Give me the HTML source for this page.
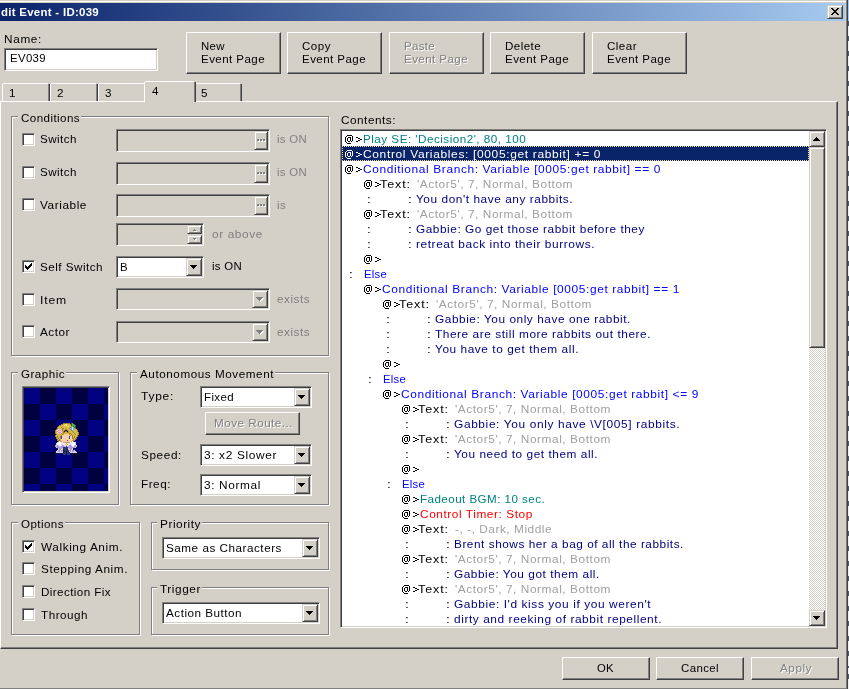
<!DOCTYPE html><html><head><meta charset="utf-8"><style>*{margin:0;padding:0}html,body{width:849px;height:689px;overflow:hidden;background:#d4d0c8;position:relative}
body>div,body>svg{position:absolute;box-sizing:border-box}
.t{will-change:transform;transform-origin:0 0;font-family:"Liberation Sans", sans-serif;font-size:11px;line-height:13px;white-space:pre}</style></head><body><div style="left:0px;top:1px;width:846px;height:1px;background:#ffffff"></div><div style="left:0px;top:688px;width:846px;height:1px;background:#808080"></div><div style="left:846px;top:0px;width:1px;height:689px;background:#808080"></div><div style="left:847px;top:0px;width:1px;height:689px;background:#404040"></div><div style="left:848px;top:0px;width:1px;height:21px;background:#a6caf0"></div><div style="left:848px;top:21px;width:1px;height:668px;background:repeating-linear-gradient(to bottom,#eef0f0 0 6px,#4a5a66 6px 11px,#eef0f0 11px 15px);background-position:0 -21px"></div><div style="left:0px;top:3px;width:845px;height:18px;background:linear-gradient(to right,#0a246a,#a6caf0)"></div><div class="t" style="left:1px;top:6px;color:#fff;transform:scaleX(1.0392);letter-spacing:0.28px;font-weight:bold;">dit Event - ID:039</div><div style="left:827px;top:5px;width:16px;height:14px;background:#d4d0c8;border:1px solid;border-color:#d4d0c8 #404040 #404040 #d4d0c8;box-shadow:inset 1px 1px 0 #ffffff,inset -1px -1px 0 #808080"></div><svg style="left:831px;top:8px" width="8" height="7" shape-rendering="crispEdges" fill="#000"><rect x="0" y="0" width="2" height="1"/><rect x="6" y="0" width="2" height="1"/><rect x="1" y="1" width="2" height="1"/><rect x="5" y="1" width="2" height="1"/><rect x="2" y="2" width="2" height="1"/><rect x="4" y="2" width="2" height="1"/><rect x="3" y="3" width="2" height="1"/><rect x="2" y="4" width="2" height="1"/><rect x="4" y="4" width="2" height="1"/><rect x="1" y="5" width="2" height="1"/><rect x="5" y="5" width="2" height="1"/><rect x="0" y="6" width="2" height="1"/><rect x="6" y="6" width="2" height="1"/><rect x="3" y="2" width="2" height="3"/></svg><div class="t" style="left:4px;top:33px;color:#000;transform:scaleX(1.0690);letter-spacing:0.63px;">Name:</div><div style="left:4px;top:48px;width:154px;height:23px;background:#ffffff;border:1px solid;border-color:#808080 #ffffff #ffffff #808080;box-shadow:inset 1px 1px 0 #404040,inset -1px -1px 0 #d4d0c8"></div><div class="t" style="left:10px;top:52px;color:#000;transform:scaleX(1.0360);letter-spacing:0.34px;">EV039</div><div style="left:186px;top:32px;width:95px;height:42px;background:#d4d0c8;border:1px solid;border-color:#ffffff #404040 #404040 #ffffff;box-shadow:inset -1px -1px 0 #808080"></div><div class="t" style="left:201px;top:40px;color:#000;transform:scaleX(1.0361);letter-spacing:0.38px;">New</div><div class="t" style="left:201px;top:53px;color:#000;transform:scaleX(1.0501);letter-spacing:0.41px;">Event Page</div><div style="left:287px;top:32px;width:95px;height:42px;background:#d4d0c8;border:1px solid;border-color:#ffffff #404040 #404040 #ffffff;box-shadow:inset -1px -1px 0 #808080"></div><div class="t" style="left:302px;top:40px;color:#000;transform:scaleX(1.0516);letter-spacing:0.47px;">Copy</div><div class="t" style="left:302px;top:53px;color:#000;transform:scaleX(1.0501);letter-spacing:0.41px;">Event Page</div><div style="left:389px;top:32px;width:95px;height:42px;background:#d4d0c8;border:1px solid;border-color:#ffffff #404040 #404040 #ffffff;box-shadow:inset -1px -1px 0 #808080"></div><div class="t" style="left:405px;top:41px;color:#ffffff;transform:scaleX(1.0406);letter-spacing:0.33px;">Paste</div><div class="t" style="left:404px;top:40px;color:#808080;transform:scaleX(1.0406);letter-spacing:0.33px;">Paste</div><div class="t" style="left:405px;top:54px;color:#ffffff;transform:scaleX(1.0501);letter-spacing:0.41px;">Event Page</div><div class="t" style="left:404px;top:53px;color:#808080;transform:scaleX(1.0501);letter-spacing:0.41px;">Event Page</div><div style="left:490px;top:32px;width:95px;height:42px;background:#d4d0c8;border:1px solid;border-color:#ffffff #404040 #404040 #ffffff;box-shadow:inset -1px -1px 0 #808080"></div><div class="t" style="left:505px;top:40px;color:#000;transform:scaleX(1.0529);letter-spacing:0.40px;">Delete</div><div class="t" style="left:505px;top:53px;color:#000;transform:scaleX(1.0501);letter-spacing:0.41px;">Event Page</div><div style="left:592px;top:32px;width:95px;height:42px;background:#d4d0c8;border:1px solid;border-color:#ffffff #404040 #404040 #ffffff;box-shadow:inset -1px -1px 0 #808080"></div><div class="t" style="left:607px;top:40px;color:#000;transform:scaleX(1.0563);letter-spacing:0.42px;">Clear</div><div class="t" style="left:607px;top:53px;color:#000;transform:scaleX(1.0501);letter-spacing:0.41px;">Event Page</div><div style="left:0px;top:101px;width:838px;height:548px;border:1px solid;border-color:#ffffff #404040 #404040 #ffffff;box-shadow:inset -1px -1px 0 #808080"></div><div style="left:2px;top:84px;width:1px;height:17px;background:#ffffff"></div><div style="left:3px;top:83px;width:45px;height:1px;background:#ffffff"></div><div style="left:48px;top:84px;width:1px;height:17px;background:#808080"></div><div style="left:49px;top:84px;width:1px;height:17px;background:#404040"></div><div class="t" style="left:9px;top:87px;color:#000;transform:scaleX(1.0571);letter-spacing:0.50px;">1</div><div style="left:50px;top:84px;width:1px;height:17px;background:#ffffff"></div><div style="left:51px;top:83px;width:45px;height:1px;background:#ffffff"></div><div style="left:96px;top:84px;width:1px;height:17px;background:#808080"></div><div style="left:97px;top:84px;width:1px;height:17px;background:#404040"></div><div class="t" style="left:57px;top:87px;color:#000;transform:scaleX(1.0571);letter-spacing:0.50px;">2</div><div style="left:98px;top:84px;width:1px;height:17px;background:#ffffff"></div><div style="left:99px;top:83px;width:45px;height:1px;background:#ffffff"></div><div style="left:144px;top:84px;width:1px;height:17px;background:#808080"></div><div style="left:145px;top:84px;width:1px;height:17px;background:#404040"></div><div class="t" style="left:105px;top:87px;color:#000;transform:scaleX(1.0571);letter-spacing:0.50px;">3</div><div style="left:194px;top:84px;width:1px;height:17px;background:#ffffff"></div><div style="left:195px;top:83px;width:45px;height:1px;background:#ffffff"></div><div style="left:240px;top:84px;width:1px;height:17px;background:#808080"></div><div style="left:241px;top:84px;width:1px;height:17px;background:#404040"></div><div class="t" style="left:201px;top:87px;color:#000;transform:scaleX(1.0571);letter-spacing:0.50px;">5</div><div style="left:144px;top:81px;width:52px;height:22px;background:#d4d0c8"></div><div style="left:144px;top:82px;width:1px;height:20px;background:#ffffff"></div><div style="left:145px;top:81px;width:49px;height:1px;background:#ffffff"></div><div style="left:194px;top:82px;width:1px;height:20px;background:#808080"></div><div style="left:195px;top:82px;width:1px;height:20px;background:#404040"></div><div class="t" style="left:152px;top:85px;color:#000;transform:scaleX(1.0571);letter-spacing:0.50px;">4</div><div style="left:12px;top:117px;width:318px;height:240px;border:1px solid #ffffff"></div><div style="left:11px;top:116px;width:318px;height:240px;border:1px solid #808080"></div><div style="left:18px;top:115px;width:63px;height:4px;background:#d4d0c8"></div><div class="t" style="left:21px;top:112px;color:#000;transform:scaleX(1.0540);letter-spacing:0.40px;">Conditions</div><div style="left:22px;top:133px;width:13px;height:13px;background:#ffffff;border:1px solid;border-color:#808080 #ffffff #ffffff #808080;box-shadow:inset 1px 1px 0 #404040,inset -1px -1px 0 #d4d0c8"></div><div class="t" style="left:40px;top:133px;color:#000;transform:scaleX(1.0567);letter-spacing:0.43px;">Switch</div><div style="left:116px;top:129px;width:154px;height:23px;background:#d4d0c8;border:1px solid;border-color:#808080 #ffffff #ffffff #808080;box-shadow:inset 1px 1px 0 #404040,inset -1px -1px 0 #d4d0c8"></div><div style="left:254px;top:131px;width:14px;height:19px;background:#d4d0c8;border:1px solid;border-color:#d4d0c8 #404040 #404040 #d4d0c8;box-shadow:inset 1px 1px 0 #ffffff,inset -1px -1px 0 #808080"></div><div style="left:257px;top:139px;width:2px;height:2px;background:#808080;box-shadow:1px 1px 0 #fff"></div><div style="left:260px;top:139px;width:2px;height:2px;background:#808080;box-shadow:1px 1px 0 #fff"></div><div style="left:263px;top:139px;width:2px;height:2px;background:#808080;box-shadow:1px 1px 0 #fff"></div><div class="t" style="left:277px;top:133px;color:#808080;transform:scaleX(1.0364);letter-spacing:0.29px;">is ON</div><div style="left:22px;top:166px;width:13px;height:13px;background:#ffffff;border:1px solid;border-color:#808080 #ffffff #ffffff #808080;box-shadow:inset 1px 1px 0 #404040,inset -1px -1px 0 #d4d0c8"></div><div class="t" style="left:40px;top:166px;color:#000;transform:scaleX(1.0567);letter-spacing:0.43px;">Switch</div><div style="left:116px;top:162px;width:154px;height:23px;background:#d4d0c8;border:1px solid;border-color:#808080 #ffffff #ffffff #808080;box-shadow:inset 1px 1px 0 #404040,inset -1px -1px 0 #d4d0c8"></div><div style="left:254px;top:164px;width:14px;height:19px;background:#d4d0c8;border:1px solid;border-color:#d4d0c8 #404040 #404040 #d4d0c8;box-shadow:inset 1px 1px 0 #ffffff,inset -1px -1px 0 #808080"></div><div style="left:257px;top:172px;width:2px;height:2px;background:#808080;box-shadow:1px 1px 0 #fff"></div><div style="left:260px;top:172px;width:2px;height:2px;background:#808080;box-shadow:1px 1px 0 #fff"></div><div style="left:263px;top:172px;width:2px;height:2px;background:#808080;box-shadow:1px 1px 0 #fff"></div><div class="t" style="left:277px;top:166px;color:#808080;transform:scaleX(1.0364);letter-spacing:0.29px;">is ON</div><div style="left:22px;top:198px;width:13px;height:13px;background:#ffffff;border:1px solid;border-color:#808080 #ffffff #ffffff #808080;box-shadow:inset 1px 1px 0 #404040,inset -1px -1px 0 #d4d0c8"></div><div class="t" style="left:40px;top:199px;color:#000;transform:scaleX(1.0754);letter-spacing:0.52px;">Variable</div><div style="left:116px;top:194px;width:154px;height:23px;background:#d4d0c8;border:1px solid;border-color:#808080 #ffffff #ffffff #808080;box-shadow:inset 1px 1px 0 #404040,inset -1px -1px 0 #d4d0c8"></div><div style="left:254px;top:196px;width:14px;height:19px;background:#d4d0c8;border:1px solid;border-color:#d4d0c8 #404040 #404040 #d4d0c8;box-shadow:inset 1px 1px 0 #ffffff,inset -1px -1px 0 #808080"></div><div style="left:257px;top:204px;width:2px;height:2px;background:#808080;box-shadow:1px 1px 0 #fff"></div><div style="left:260px;top:204px;width:2px;height:2px;background:#808080;box-shadow:1px 1px 0 #fff"></div><div style="left:263px;top:204px;width:2px;height:2px;background:#808080;box-shadow:1px 1px 0 #fff"></div><div class="t" style="left:277px;top:199px;color:#808080;transform:scaleX(1.0527);letter-spacing:0.30px;">is</div><div style="left:116px;top:223px;width:88px;height:23px;background:#d4d0c8;border:1px solid;border-color:#808080 #ffffff #ffffff #808080;box-shadow:inset 1px 1px 0 #404040,inset -1px -1px 0 #d4d0c8"></div><div style="left:187px;top:225px;width:15px;height:9px;background:#d4d0c8;border:1px solid;border-color:#d4d0c8 #404040 #404040 #d4d0c8;box-shadow:inset 1px 1px 0 #ffffff,inset -1px -1px 0 #808080"></div><div style="left:187px;top:235px;width:15px;height:9px;background:#d4d0c8;border:1px solid;border-color:#d4d0c8 #404040 #404040 #d4d0c8;box-shadow:inset 1px 1px 0 #ffffff,inset -1px -1px 0 #808080"></div><svg style="left:193px;top:229px" width="4" height="3" shape-rendering="crispEdges"><g fill="#fff"><rect x="1" y="2" width="3" height="1"/><rect x="2" y="1" width="1" height="1"/></g><g fill="#808080"><rect x="0" y="1" width="3" height="1"/><rect x="1" y="0" width="1" height="1"/></g></svg><svg style="left:193px;top:238px" width="4" height="3" shape-rendering="crispEdges"><g fill="#fff"><rect x="1" y="1" width="3" height="1"/><rect x="2" y="2" width="1" height="1"/></g><g fill="#808080"><rect x="0" y="0" width="3" height="1"/><rect x="1" y="1" width="1" height="1"/></g></svg><div class="t" style="left:212px;top:228px;color:#808080;transform:scaleX(1.0765);letter-spacing:0.57px;">or above</div><div style="left:22px;top:260px;width:13px;height:13px;background:#ffffff;border:1px solid;border-color:#808080 #ffffff #ffffff #808080;box-shadow:inset 1px 1px 0 #404040,inset -1px -1px 0 #d4d0c8"></div><svg style="left:25px;top:263px" width="7" height="7" shape-rendering="crispEdges" fill="#000"><rect x="6" y="0" width="1" height="1"/><rect x="5" y="1" width="1" height="1"/><rect x="6" y="1" width="1" height="1"/><rect x="0" y="2" width="1" height="1"/><rect x="4" y="2" width="1" height="1"/><rect x="5" y="2" width="1" height="1"/><rect x="6" y="2" width="1" height="1"/><rect x="0" y="3" width="1" height="1"/><rect x="1" y="3" width="1" height="1"/><rect x="3" y="3" width="1" height="1"/><rect x="4" y="3" width="1" height="1"/><rect x="5" y="3" width="1" height="1"/><rect x="0" y="4" width="1" height="1"/><rect x="1" y="4" width="1" height="1"/><rect x="2" y="4" width="1" height="1"/><rect x="3" y="4" width="1" height="1"/><rect x="4" y="4" width="1" height="1"/><rect x="1" y="5" width="1" height="1"/><rect x="2" y="5" width="1" height="1"/><rect x="3" y="5" width="1" height="1"/><rect x="2" y="6" width="1" height="1"/></svg><div class="t" style="left:40px;top:261px;color:#000;transform:scaleX(1.0630);letter-spacing:0.44px;">Self Switch</div><div style="left:116px;top:256px;width:88px;height:22px;background:#ffffff;border:1px solid;border-color:#808080 #ffffff #ffffff #808080;box-shadow:inset 1px 1px 0 #404040,inset -1px -1px 0 #d4d0c8"></div><div style="left:186px;top:258px;width:16px;height:18px;background:#d4d0c8;border:1px solid;border-color:#d4d0c8 #404040 #404040 #d4d0c8;box-shadow:inset 1px 1px 0 #ffffff,inset -1px -1px 0 #808080"></div><svg style="left:190px;top:265px" width="7" height="4" shape-rendering="crispEdges" fill="#000"><rect x="0" y="0" width="7" height="1"/><rect x="1" y="1" width="5" height="1"/><rect x="2" y="2" width="3" height="1"/><rect x="3" y="3" width="1" height="1"/></svg><div class="t" style="left:120px;top:261px;color:#000;transform:scaleX(1.0357);letter-spacing:0.38px;">B</div><div class="t" style="left:212px;top:260px;color:#000;transform:scaleX(1.0364);letter-spacing:0.29px;">is ON</div><div style="left:22px;top:293px;width:13px;height:13px;background:#ffffff;border:1px solid;border-color:#808080 #ffffff #ffffff #808080;box-shadow:inset 1px 1px 0 #404040,inset -1px -1px 0 #d4d0c8"></div><div class="t" style="left:40px;top:294px;color:#000;transform:scaleX(1.1045);letter-spacing:0.76px;">Item</div><div style="left:116px;top:288px;width:154px;height:22px;background:#d4d0c8;border:1px solid;border-color:#808080 #ffffff #ffffff #808080;box-shadow:inset 1px 1px 0 #404040,inset -1px -1px 0 #d4d0c8"></div><div style="left:252px;top:290px;width:16px;height:18px;background:#d4d0c8;border:1px solid;border-color:#d4d0c8 #404040 #404040 #d4d0c8;box-shadow:inset 1px 1px 0 #ffffff,inset -1px -1px 0 #808080"></div><svg style="left:256px;top:297px" width="8" height="5" shape-rendering="crispEdges"><g fill="#fff"><rect x="1" y="1" width="7" height="1"/><rect x="2" y="2" width="5" height="1"/><rect x="3" y="3" width="3" height="1"/><rect x="4" y="4" width="1" height="1"/></g><g fill="#808080"><rect x="0" y="0" width="7" height="1"/><rect x="1" y="1" width="5" height="1"/><rect x="2" y="2" width="3" height="1"/><rect x="3" y="3" width="1" height="1"/></g></svg><div class="t" style="left:277px;top:293px;color:#808080;transform:scaleX(1.0693);letter-spacing:0.46px;">exists</div><div style="left:22px;top:325px;width:13px;height:13px;background:#ffffff;border:1px solid;border-color:#808080 #ffffff #ffffff #808080;box-shadow:inset 1px 1px 0 #404040,inset -1px -1px 0 #d4d0c8"></div><div class="t" style="left:40px;top:326px;color:#000;transform:scaleX(1.0672);letter-spacing:0.48px;">Actor</div><div style="left:116px;top:321px;width:154px;height:22px;background:#d4d0c8;border:1px solid;border-color:#808080 #ffffff #ffffff #808080;box-shadow:inset 1px 1px 0 #404040,inset -1px -1px 0 #d4d0c8"></div><div style="left:252px;top:323px;width:16px;height:18px;background:#d4d0c8;border:1px solid;border-color:#d4d0c8 #404040 #404040 #d4d0c8;box-shadow:inset 1px 1px 0 #ffffff,inset -1px -1px 0 #808080"></div><svg style="left:256px;top:330px" width="8" height="5" shape-rendering="crispEdges"><g fill="#fff"><rect x="1" y="1" width="7" height="1"/><rect x="2" y="2" width="5" height="1"/><rect x="3" y="3" width="3" height="1"/><rect x="4" y="4" width="1" height="1"/></g><g fill="#808080"><rect x="0" y="0" width="7" height="1"/><rect x="1" y="1" width="5" height="1"/><rect x="2" y="2" width="3" height="1"/><rect x="3" y="3" width="1" height="1"/></g></svg><div class="t" style="left:277px;top:326px;color:#808080;transform:scaleX(1.0693);letter-spacing:0.46px;">exists</div><div style="left:12px;top:373px;width:108px;height:133px;border:1px solid #ffffff"></div><div style="left:11px;top:372px;width:108px;height:133px;border:1px solid #808080"></div><div style="left:18px;top:371px;width:48px;height:4px;background:#d4d0c8"></div><div class="t" style="left:21px;top:368px;color:#000;transform:scaleX(1.0568);letter-spacing:0.44px;">Graphic</div><div style="left:22px;top:386px;width:88px;height:107px;background:#000080;border:1px solid;border-color:#808080 #ffffff #ffffff #808080;box-shadow:inset 1px 1px 0 #404040,inset -1px -1px 0 #d4d0c8"></div><div style="left:24px;top:388px;width:84px;height:103px;background:repeating-conic-gradient(#000040 0 25%,#000080 0 50%) 0 0/32px 32px"></div><svg style="left:54px;top:423px" width="26" height="32" shape-rendering="crispEdges"><rect x="9" y="0" width="7" height="1" fill="#a08028"/><rect x="17" y="0" width="1" height="1" fill="#306820"/><rect x="18" y="0" width="1" height="1" fill="#58b048"/><rect x="7" y="1" width="2" height="1" fill="#a08028"/><rect x="9" y="1" width="2" height="1" fill="#d8b848"/><rect x="11" y="1" width="2" height="1" fill="#f8e078"/><rect x="13" y="1" width="3" height="1" fill="#d8b848"/><rect x="16" y="1" width="1" height="1" fill="#a08028"/><rect x="17" y="1" width="1" height="1" fill="#306820"/><rect x="18" y="1" width="2" height="1" fill="#58b048"/><rect x="20" y="1" width="1" height="1" fill="#306820"/><rect x="5" y="2" width="2" height="1" fill="#a08028"/><rect x="7" y="2" width="3" height="1" fill="#d8b848"/><rect x="10" y="2" width="3" height="1" fill="#f8e078"/><rect x="13" y="2" width="4" height="1" fill="#d8b848"/><rect x="17" y="2" width="1" height="1" fill="#306820"/><rect x="18" y="2" width="3" height="1" fill="#58b048"/><rect x="21" y="2" width="1" height="1" fill="#306820"/><rect x="4" y="3" width="1" height="1" fill="#a08028"/><rect x="5" y="3" width="8" height="1" fill="#d8b848"/><rect x="13" y="3" width="2" height="1" fill="#f8e078"/><rect x="15" y="3" width="2" height="1" fill="#d8b848"/><rect x="17" y="3" width="1" height="1" fill="#a08028"/><rect x="18" y="3" width="1" height="1" fill="#68b0f8"/><rect x="19" y="3" width="1" height="1" fill="#306820"/><rect x="20" y="3" width="1" height="1" fill="#58b048"/><rect x="21" y="3" width="1" height="1" fill="#306820"/><rect x="3" y="4" width="1" height="1" fill="#a08028"/><rect x="4" y="4" width="3" height="1" fill="#d8b848"/><rect x="7" y="4" width="1" height="1" fill="#a08028"/><rect x="8" y="4" width="8" height="1" fill="#d8b848"/><rect x="16" y="4" width="1" height="1" fill="#a08028"/><rect x="17" y="4" width="1" height="1" fill="#68b0f8"/><rect x="18" y="4" width="1" height="1" fill="#d0f0ff"/><rect x="19" y="4" width="1" height="1" fill="#68b0f8"/><rect x="20" y="4" width="2" height="1" fill="#306820"/><rect x="3" y="5" width="1" height="1" fill="#a08028"/><rect x="4" y="5" width="4" height="1" fill="#d8b848"/><rect x="8" y="5" width="2" height="1" fill="#a08028"/><rect x="10" y="5" width="5" height="1" fill="#d8b848"/><rect x="15" y="5" width="1" height="1" fill="#a08028"/><rect x="16" y="5" width="2" height="1" fill="#68b0f8"/><rect x="18" y="5" width="1" height="1" fill="#ffe040"/><rect x="19" y="5" width="2" height="1" fill="#68b0f8"/><rect x="21" y="5" width="1" height="1" fill="#a08028"/><rect x="2" y="6" width="1" height="1" fill="#a08028"/><rect x="3" y="6" width="1" height="1" fill="#d8b848"/><rect x="4" y="6" width="1" height="1" fill="#ffe0e8"/><rect x="5" y="6" width="1" height="1" fill="#f090a8"/><rect x="6" y="6" width="1" height="1" fill="#ffe0e8"/><rect x="7" y="6" width="1" height="1" fill="#d8b848"/><rect x="8" y="6" width="1" height="1" fill="#a08028"/><rect x="9" y="6" width="2" height="1" fill="#d8b848"/><rect x="11" y="6" width="2" height="1" fill="#a08028"/><rect x="13" y="6" width="3" height="1" fill="#d8b848"/><rect x="16" y="6" width="1" height="1" fill="#a08028"/><rect x="17" y="6" width="1" height="1" fill="#68b0f8"/><rect x="18" y="6" width="1" height="1" fill="#d0f0ff"/><rect x="19" y="6" width="1" height="1" fill="#68b0f8"/><rect x="20" y="6" width="2" height="1" fill="#d8b848"/><rect x="22" y="6" width="1" height="1" fill="#a08028"/><rect x="1" y="7" width="1" height="1" fill="#a08028"/><rect x="2" y="7" width="1" height="1" fill="#d8b848"/><rect x="3" y="7" width="1" height="1" fill="#ffe0e8"/><rect x="4" y="7" width="3" height="1" fill="#f090a8"/><rect x="7" y="7" width="1" height="1" fill="#ffe0e8"/><rect x="8" y="7" width="1" height="1" fill="#a08028"/><rect x="9" y="7" width="1" height="1" fill="#d8b848"/><rect x="10" y="7" width="1" height="1" fill="#a08028"/><rect x="11" y="7" width="2" height="1" fill="#181830"/><rect x="13" y="7" width="1" height="1" fill="#a08028"/><rect x="14" y="7" width="3" height="1" fill="#d8b848"/><rect x="17" y="7" width="1" height="1" fill="#a08028"/><rect x="18" y="7" width="1" height="1" fill="#68b0f8"/><rect x="19" y="7" width="4" height="1" fill="#d8b848"/><rect x="23" y="7" width="1" height="1" fill="#a08028"/><rect x="1" y="8" width="1" height="1" fill="#a08028"/><rect x="2" y="8" width="2" height="1" fill="#f090a8"/><rect x="4" y="8" width="1" height="1" fill="#ffe0e8"/><rect x="5" y="8" width="1" height="1" fill="#ffe040"/><rect x="6" y="8" width="1" height="1" fill="#ffe0e8"/><rect x="7" y="8" width="2" height="1" fill="#f090a8"/><rect x="9" y="8" width="1" height="1" fill="#a08028"/><rect x="10" y="8" width="1" height="1" fill="#181830"/><rect x="11" y="8" width="2" height="1" fill="#a08028"/><rect x="13" y="8" width="1" height="1" fill="#181830"/><rect x="14" y="8" width="1" height="1" fill="#a08028"/><rect x="15" y="8" width="3" height="1" fill="#d8b848"/><rect x="18" y="8" width="1" height="1" fill="#a08028"/><rect x="19" y="8" width="4" height="1" fill="#d8b848"/><rect x="23" y="8" width="1" height="1" fill="#a08028"/><rect x="1" y="9" width="1" height="1" fill="#a08028"/><rect x="2" y="9" width="1" height="1" fill="#d8b848"/><rect x="3" y="9" width="1" height="1" fill="#ffe0e8"/><rect x="4" y="9" width="3" height="1" fill="#f090a8"/><rect x="7" y="9" width="1" height="1" fill="#ffe0e8"/><rect x="8" y="9" width="1" height="1" fill="#d8b848"/><rect x="9" y="9" width="2" height="1" fill="#a08028"/><rect x="11" y="9" width="2" height="1" fill="#d8b848"/><rect x="13" y="9" width="2" height="1" fill="#a08028"/><rect x="15" y="9" width="4" height="1" fill="#d8b848"/><rect x="19" y="9" width="1" height="1" fill="#a08028"/><rect x="20" y="9" width="4" height="1" fill="#d8b848"/><rect x="24" y="9" width="1" height="1" fill="#a08028"/><rect x="1" y="10" width="1" height="1" fill="#a08028"/><rect x="2" y="10" width="2" height="1" fill="#d8b848"/><rect x="4" y="10" width="1" height="1" fill="#ffe0e8"/><rect x="5" y="10" width="1" height="1" fill="#f090a8"/><rect x="6" y="10" width="1" height="1" fill="#ffe0e8"/><rect x="7" y="10" width="1" height="1" fill="#a08028"/><rect x="8" y="10" width="1" height="1" fill="#d8b848"/><rect x="9" y="10" width="1" height="1" fill="#a08028"/><rect x="10" y="10" width="5" height="1" fill="#d8b848"/><rect x="15" y="10" width="2" height="1" fill="#a08028"/><rect x="17" y="10" width="3" height="1" fill="#d8b848"/><rect x="20" y="10" width="1" height="1" fill="#a08028"/><rect x="21" y="10" width="3" height="1" fill="#d8b848"/><rect x="24" y="10" width="1" height="1" fill="#a08028"/><rect x="2" y="11" width="1" height="1" fill="#a08028"/><rect x="3" y="11" width="2" height="1" fill="#d8b848"/><rect x="5" y="11" width="1" height="1" fill="#f090a8"/><rect x="6" y="11" width="2" height="1" fill="#d8b848"/><rect x="8" y="11" width="1" height="1" fill="#a08028"/><rect x="9" y="11" width="1" height="1" fill="#d8b848"/><rect x="10" y="11" width="5" height="1" fill="#f8d0a8"/><rect x="15" y="11" width="1" height="1" fill="#a08028"/><rect x="16" y="11" width="1" height="1" fill="#d8b848"/><rect x="17" y="11" width="1" height="1" fill="#a08028"/><rect x="18" y="11" width="3" height="1" fill="#d8b848"/><rect x="21" y="11" width="1" height="1" fill="#a08028"/><rect x="22" y="11" width="2" height="1" fill="#d8b848"/><rect x="24" y="11" width="1" height="1" fill="#a08028"/><rect x="1" y="12" width="1" height="1" fill="#a08028"/><rect x="2" y="12" width="5" height="1" fill="#d8b848"/><rect x="7" y="12" width="1" height="1" fill="#a08028"/><rect x="8" y="12" width="8" height="1" fill="#f8d0a8"/><rect x="16" y="12" width="1" height="1" fill="#a08028"/><rect x="17" y="12" width="1" height="1" fill="#d8b848"/><rect x="18" y="12" width="1" height="1" fill="#a08028"/><rect x="19" y="12" width="4" height="1" fill="#d8b848"/><rect x="23" y="12" width="1" height="1" fill="#a08028"/><rect x="1" y="13" width="1" height="1" fill="#a08028"/><rect x="2" y="13" width="1" height="1" fill="#d8b848"/><rect x="3" y="13" width="1" height="1" fill="#a08028"/><rect x="4" y="13" width="2" height="1" fill="#d8b848"/><rect x="6" y="13" width="1" height="1" fill="#a08028"/><rect x="7" y="13" width="1" height="1" fill="#2848a0"/><rect x="8" y="13" width="7" height="1" fill="#f8d0a8"/><rect x="15" y="13" width="1" height="1" fill="#2848a0"/><rect x="16" y="13" width="2" height="1" fill="#f8d0a8"/><rect x="18" y="13" width="1" height="1" fill="#a08028"/><rect x="19" y="13" width="1" height="1" fill="#d8b848"/><rect x="20" y="13" width="1" height="1" fill="#a08028"/><rect x="21" y="13" width="2" height="1" fill="#d8b848"/><rect x="23" y="13" width="1" height="1" fill="#a08028"/><rect x="2" y="14" width="2" height="1" fill="#a08028"/><rect x="4" y="14" width="2" height="1" fill="#d8b848"/><rect x="6" y="14" width="1" height="1" fill="#a08028"/><rect x="7" y="14" width="1" height="1" fill="#2848a0"/><rect x="8" y="14" width="1" height="1" fill="#d0f0ff"/><rect x="9" y="14" width="6" height="1" fill="#f8d0a8"/><rect x="15" y="14" width="1" height="1" fill="#2848a0"/><rect x="16" y="14" width="1" height="1" fill="#d0f0ff"/><rect x="17" y="14" width="1" height="1" fill="#f8d0a8"/><rect x="18" y="14" width="1" height="1" fill="#a08028"/><rect x="19" y="14" width="1" height="1" fill="#d8b848"/><rect x="20" y="14" width="1" height="1" fill="#a08028"/><rect x="21" y="14" width="1" height="1" fill="#d8b848"/><rect x="22" y="14" width="1" height="1" fill="#a08028"/><rect x="2" y="15" width="1" height="1" fill="#a08028"/><rect x="3" y="15" width="1" height="1" fill="#d8b848"/><rect x="4" y="15" width="1" height="1" fill="#a08028"/><rect x="5" y="15" width="1" height="1" fill="#d8b848"/><rect x="6" y="15" width="1" height="1" fill="#a08028"/><rect x="7" y="15" width="1" height="1" fill="#2848a0"/><rect x="8" y="15" width="7" height="1" fill="#f8d0a8"/><rect x="15" y="15" width="1" height="1" fill="#2848a0"/><rect x="16" y="15" width="2" height="1" fill="#f8d0a8"/><rect x="18" y="15" width="2" height="1" fill="#a08028"/><rect x="20" y="15" width="1" height="1" fill="#d8b848"/><rect x="21" y="15" width="2" height="1" fill="#a08028"/><rect x="3" y="16" width="1" height="1" fill="#a08028"/><rect x="4" y="16" width="1" height="1" fill="#d8b848"/><rect x="5" y="16" width="1" height="1" fill="#a08028"/><rect x="6" y="16" width="13" height="1" fill="#f8d0a8"/><rect x="19" y="16" width="1" height="1" fill="#a08028"/><rect x="20" y="16" width="1" height="1" fill="#d8b848"/><rect x="21" y="16" width="1" height="1" fill="#a08028"/><rect x="3" y="17" width="3" height="1" fill="#a08028"/><rect x="6" y="17" width="1" height="1" fill="#d09870"/><rect x="7" y="17" width="6" height="1" fill="#f8d0a8"/><rect x="13" y="17" width="1" height="1" fill="#d03040"/><rect x="14" y="17" width="4" height="1" fill="#f8d0a8"/><rect x="18" y="17" width="1" height="1" fill="#d09870"/><rect x="19" y="17" width="2" height="1" fill="#a08028"/><rect x="4" y="18" width="1" height="1" fill="#a08028"/><rect x="5" y="18" width="1" height="1" fill="#f8f8ff"/><rect x="6" y="18" width="2" height="1" fill="#d09870"/><rect x="8" y="18" width="9" height="1" fill="#f8d0a8"/><rect x="17" y="18" width="1" height="1" fill="#d09870"/><rect x="18" y="18" width="1" height="1" fill="#f8f8ff"/><rect x="19" y="18" width="1" height="1" fill="#a08028"/><rect x="3" y="19" width="1" height="1" fill="#d8d0f8"/><rect x="4" y="19" width="3" height="1" fill="#f8f8ff"/><rect x="7" y="19" width="1" height="1" fill="#d8d0f8"/><rect x="8" y="19" width="1" height="1" fill="#f8f8ff"/><rect x="9" y="19" width="7" height="1" fill="#d09870"/><rect x="16" y="19" width="1" height="1" fill="#f8f8ff"/><rect x="17" y="19" width="1" height="1" fill="#d8d0f8"/><rect x="18" y="19" width="3" height="1" fill="#f8f8ff"/><rect x="21" y="19" width="1" height="1" fill="#d8d0f8"/><rect x="2" y="20" width="1" height="1" fill="#d8d0f8"/><rect x="3" y="20" width="5" height="1" fill="#f8f8ff"/><rect x="8" y="20" width="1" height="1" fill="#d8d0f8"/><rect x="9" y="20" width="3" height="1" fill="#f8f8ff"/><rect x="12" y="20" width="1" height="1" fill="#f8a040"/><rect x="13" y="20" width="2" height="1" fill="#f8f8ff"/><rect x="15" y="20" width="1" height="1" fill="#d8d0f8"/><rect x="16" y="20" width="5" height="1" fill="#f8f8ff"/><rect x="21" y="20" width="1" height="1" fill="#d8d0f8"/><rect x="1" y="21" width="1" height="1" fill="#181830"/><rect x="2" y="21" width="1" height="1" fill="#d8d0f8"/><rect x="3" y="21" width="4" height="1" fill="#f8f8ff"/><rect x="7" y="21" width="2" height="1" fill="#d8d0f8"/><rect x="9" y="21" width="2" height="1" fill="#f8f8ff"/><rect x="11" y="21" width="1" height="1" fill="#f8a040"/><rect x="12" y="21" width="1" height="1" fill="#ffe040"/><rect x="13" y="21" width="1" height="1" fill="#f8a040"/><rect x="14" y="21" width="2" height="1" fill="#f8f8ff"/><rect x="16" y="21" width="2" height="1" fill="#d8d0f8"/><rect x="18" y="21" width="3" height="1" fill="#f8f8ff"/><rect x="21" y="21" width="1" height="1" fill="#d8d0f8"/><rect x="22" y="21" width="1" height="1" fill="#181830"/><rect x="0" y="22" width="1" height="1" fill="#181830"/><rect x="1" y="22" width="1" height="1" fill="#a898e0"/><rect x="2" y="22" width="1" height="1" fill="#d8d0f8"/><rect x="3" y="22" width="1" height="1" fill="#a898e0"/><rect x="4" y="22" width="1" height="1" fill="#d8d0f8"/><rect x="5" y="22" width="2" height="1" fill="#f8f8ff"/><rect x="7" y="22" width="1" height="1" fill="#d8d0f8"/><rect x="8" y="22" width="2" height="1" fill="#a898e0"/><rect x="10" y="22" width="1" height="1" fill="#d8d0f8"/><rect x="11" y="22" width="1" height="1" fill="#f8f8ff"/><rect x="12" y="22" width="1" height="1" fill="#f8a040"/><rect x="13" y="22" width="1" height="1" fill="#f8f8ff"/><rect x="14" y="22" width="1" height="1" fill="#d8d0f8"/><rect x="15" y="22" width="2" height="1" fill="#a898e0"/><rect x="17" y="22" width="1" height="1" fill="#d8d0f8"/><rect x="18" y="22" width="2" height="1" fill="#f8f8ff"/><rect x="20" y="22" width="1" height="1" fill="#d8d0f8"/><rect x="21" y="22" width="1" height="1" fill="#a898e0"/><rect x="22" y="22" width="1" height="1" fill="#d8d0f8"/><rect x="23" y="22" width="1" height="1" fill="#181830"/><rect x="0" y="23" width="1" height="1" fill="#181830"/><rect x="1" y="23" width="4" height="1" fill="#a898e0"/><rect x="5" y="23" width="2" height="1" fill="#d8d0f8"/><rect x="7" y="23" width="4" height="1" fill="#a898e0"/><rect x="11" y="23" width="1" height="1" fill="#d8d0f8"/><rect x="12" y="23" width="1" height="1" fill="#283878"/><rect x="13" y="23" width="1" height="1" fill="#d8d0f8"/><rect x="14" y="23" width="4" height="1" fill="#a898e0"/><rect x="18" y="23" width="2" height="1" fill="#d8d0f8"/><rect x="20" y="23" width="3" height="1" fill="#a898e0"/><rect x="23" y="23" width="1" height="1" fill="#181830"/><rect x="1" y="24" width="1" height="1" fill="#181830"/><rect x="2" y="24" width="1" height="1" fill="#d8d0f8"/><rect x="3" y="24" width="6" height="1" fill="#a898e0"/><rect x="9" y="24" width="5" height="1" fill="#283878"/><rect x="14" y="24" width="7" height="1" fill="#a898e0"/><rect x="21" y="24" width="1" height="1" fill="#d8d0f8"/><rect x="22" y="24" width="1" height="1" fill="#181830"/><rect x="2" y="25" width="2" height="1" fill="#181830"/><rect x="4" y="25" width="1" height="1" fill="#d8d0f8"/><rect x="5" y="25" width="3" height="1" fill="#a898e0"/><rect x="8" y="25" width="1" height="1" fill="#f8d0a8"/><rect x="9" y="25" width="5" height="1" fill="#283878"/><rect x="14" y="25" width="1" height="1" fill="#f8d0a8"/><rect x="15" y="25" width="3" height="1" fill="#a898e0"/><rect x="18" y="25" width="1" height="1" fill="#d8d0f8"/><rect x="19" y="25" width="2" height="1" fill="#181830"/><rect x="3" y="26" width="1" height="1" fill="#181830"/><rect x="4" y="26" width="1" height="1" fill="#d8d0f8"/><rect x="5" y="26" width="2" height="1" fill="#a898e0"/><rect x="7" y="26" width="2" height="1" fill="#f8d0a8"/><rect x="9" y="26" width="1" height="1" fill="#181830"/><rect x="10" y="26" width="3" height="1" fill="#283878"/><rect x="13" y="26" width="1" height="1" fill="#181830"/><rect x="14" y="26" width="2" height="1" fill="#f8d0a8"/><rect x="16" y="26" width="2" height="1" fill="#a898e0"/><rect x="18" y="26" width="1" height="1" fill="#d8d0f8"/><rect x="19" y="26" width="1" height="1" fill="#181830"/><rect x="2" y="27" width="1" height="1" fill="#181830"/><rect x="3" y="27" width="1" height="1" fill="#d8d0f8"/><rect x="4" y="27" width="2" height="1" fill="#a898e0"/><rect x="6" y="27" width="1" height="1" fill="#d8d0f8"/><rect x="7" y="27" width="2" height="1" fill="#a898e0"/><rect x="9" y="27" width="1" height="1" fill="#181830"/><rect x="10" y="27" width="2" height="1" fill="#283878"/><rect x="12" y="27" width="1" height="1" fill="#181830"/><rect x="13" y="27" width="2" height="1" fill="#283878"/><rect x="15" y="27" width="2" height="1" fill="#a898e0"/><rect x="17" y="27" width="1" height="1" fill="#d8d0f8"/><rect x="18" y="27" width="2" height="1" fill="#a898e0"/><rect x="20" y="27" width="1" height="1" fill="#d8d0f8"/><rect x="21" y="27" width="1" height="1" fill="#181830"/><rect x="1" y="28" width="1" height="1" fill="#181830"/><rect x="2" y="28" width="2" height="1" fill="#d8d0f8"/><rect x="4" y="28" width="2" height="1" fill="#a898e0"/><rect x="6" y="28" width="1" height="1" fill="#d8d0f8"/><rect x="7" y="28" width="1" height="1" fill="#a898e0"/><rect x="8" y="28" width="1" height="1" fill="#d8d0f8"/><rect x="9" y="28" width="2" height="1" fill="#181830"/><rect x="11" y="28" width="1" height="1" fill="#283878"/><rect x="12" y="28" width="1" height="1" fill="#181830"/><rect x="13" y="28" width="1" height="1" fill="#283878"/><rect x="14" y="28" width="1" height="1" fill="#181830"/><rect x="15" y="28" width="1" height="1" fill="#d8d0f8"/><rect x="16" y="28" width="1" height="1" fill="#a898e0"/><rect x="17" y="28" width="1" height="1" fill="#d8d0f8"/><rect x="18" y="28" width="2" height="1" fill="#a898e0"/><rect x="20" y="28" width="2" height="1" fill="#d8d0f8"/><rect x="22" y="28" width="1" height="1" fill="#181830"/><rect x="1" y="29" width="1" height="1" fill="#181830"/><rect x="2" y="29" width="7" height="1" fill="#d8d0f8"/><rect x="9" y="29" width="1" height="1" fill="#181830"/><rect x="10" y="29" width="2" height="1" fill="#283878"/><rect x="12" y="29" width="1" height="1" fill="#181830"/><rect x="13" y="29" width="2" height="1" fill="#283878"/><rect x="15" y="29" width="1" height="1" fill="#181830"/><rect x="16" y="29" width="7" height="1" fill="#d8d0f8"/><rect x="23" y="29" width="1" height="1" fill="#181830"/><rect x="1" y="30" width="8" height="1" fill="#181830"/><rect x="9" y="30" width="3" height="1" fill="#283878"/><rect x="12" y="30" width="1" height="1" fill="#181830"/><rect x="13" y="30" width="3" height="1" fill="#283878"/><rect x="16" y="30" width="8" height="1" fill="#181830"/><rect x="9" y="31" width="3" height="1" fill="#283878"/><rect x="13" y="31" width="3" height="1" fill="#283878"/></svg><div style="left:131px;top:373px;width:199px;height:133px;border:1px solid #ffffff"></div><div style="left:130px;top:372px;width:199px;height:133px;border:1px solid #808080"></div><div style="left:137px;top:371px;width:138px;height:4px;background:#d4d0c8"></div><div class="t" style="left:140px;top:368px;color:#000;transform:scaleX(1.0614);letter-spacing:0.53px;">Autonomous Movement</div><div class="t" style="left:141px;top:390px;color:#000;transform:scaleX(1.0906);letter-spacing:0.67px;">Type:</div><div style="left:200px;top:386px;width:112px;height:22px;background:#ffffff;border:1px solid;border-color:#808080 #ffffff #ffffff #808080;box-shadow:inset 1px 1px 0 #404040,inset -1px -1px 0 #d4d0c8"></div><div style="left:294px;top:388px;width:16px;height:18px;background:#d4d0c8;border:1px solid;border-color:#d4d0c8 #404040 #404040 #d4d0c8;box-shadow:inset 1px 1px 0 #ffffff,inset -1px -1px 0 #808080"></div><svg style="left:298px;top:395px" width="7" height="4" shape-rendering="crispEdges" fill="#000"><rect x="0" y="0" width="7" height="1"/><rect x="1" y="1" width="5" height="1"/><rect x="2" y="2" width="3" height="1"/><rect x="3" y="3" width="1" height="1"/></svg><div class="t" style="left:204px;top:391px;color:#000;transform:scaleX(1.0460);letter-spacing:0.35px;">Fixed</div><div style="left:205px;top:412px;width:95px;height:23px;background:#d4d0c8;border:1px solid;border-color:#ffffff #404040 #404040 #ffffff;box-shadow:inset -1px -1px 0 #808080"></div><div class="t" style="left:215px;top:418px;color:#ffffff;transform:scaleX(1.0614);letter-spacing:0.46px;">Move Route...</div><div class="t" style="left:214px;top:417px;color:#808080;transform:scaleX(1.0614);letter-spacing:0.46px;">Move Route...</div><div class="t" style="left:141px;top:449px;color:#000;transform:scaleX(1.0703);letter-spacing:0.57px;">Speed:</div><div style="left:200px;top:444px;width:112px;height:22px;background:#ffffff;border:1px solid;border-color:#808080 #ffffff #ffffff #808080;box-shadow:inset 1px 1px 0 #404040,inset -1px -1px 0 #d4d0c8"></div><div style="left:294px;top:446px;width:16px;height:18px;background:#d4d0c8;border:1px solid;border-color:#d4d0c8 #404040 #404040 #d4d0c8;box-shadow:inset 1px 1px 0 #ffffff,inset -1px -1px 0 #808080"></div><svg style="left:298px;top:453px" width="7" height="4" shape-rendering="crispEdges" fill="#000"><rect x="0" y="0" width="7" height="1"/><rect x="1" y="1" width="5" height="1"/><rect x="2" y="2" width="3" height="1"/><rect x="3" y="3" width="1" height="1"/></svg><div class="t" style="left:204px;top:449px;color:#000;transform:scaleX(1.0824);letter-spacing:0.58px;">3: x2 Slower</div><div class="t" style="left:141px;top:478px;color:#000;transform:scaleX(1.0672);letter-spacing:0.48px;">Freq:</div><div style="left:200px;top:474px;width:112px;height:22px;background:#ffffff;border:1px solid;border-color:#808080 #ffffff #ffffff #808080;box-shadow:inset 1px 1px 0 #404040,inset -1px -1px 0 #d4d0c8"></div><div style="left:294px;top:476px;width:16px;height:18px;background:#d4d0c8;border:1px solid;border-color:#d4d0c8 #404040 #404040 #d4d0c8;box-shadow:inset 1px 1px 0 #ffffff,inset -1px -1px 0 #808080"></div><svg style="left:298px;top:483px" width="7" height="4" shape-rendering="crispEdges" fill="#000"><rect x="0" y="0" width="7" height="1"/><rect x="1" y="1" width="5" height="1"/><rect x="2" y="2" width="3" height="1"/><rect x="3" y="3" width="1" height="1"/></svg><div class="t" style="left:204px;top:479px;color:#000;transform:scaleX(1.0781);letter-spacing:0.58px;">3: Normal</div><div style="left:12px;top:523px;width:129px;height:113px;border:1px solid #ffffff"></div><div style="left:11px;top:522px;width:129px;height:113px;border:1px solid #808080"></div><div style="left:18px;top:521px;width:47px;height:4px;background:#d4d0c8"></div><div class="t" style="left:21px;top:518px;color:#000;transform:scaleX(1.0536);letter-spacing:0.41px;">Options</div><div style="left:22px;top:540px;width:13px;height:13px;background:#ffffff;border:1px solid;border-color:#808080 #ffffff #ffffff #808080;box-shadow:inset 1px 1px 0 #404040,inset -1px -1px 0 #d4d0c8"></div><svg style="left:25px;top:543px" width="7" height="7" shape-rendering="crispEdges" fill="#000"><rect x="6" y="0" width="1" height="1"/><rect x="5" y="1" width="1" height="1"/><rect x="6" y="1" width="1" height="1"/><rect x="0" y="2" width="1" height="1"/><rect x="4" y="2" width="1" height="1"/><rect x="5" y="2" width="1" height="1"/><rect x="6" y="2" width="1" height="1"/><rect x="0" y="3" width="1" height="1"/><rect x="1" y="3" width="1" height="1"/><rect x="3" y="3" width="1" height="1"/><rect x="4" y="3" width="1" height="1"/><rect x="5" y="3" width="1" height="1"/><rect x="0" y="4" width="1" height="1"/><rect x="1" y="4" width="1" height="1"/><rect x="2" y="4" width="1" height="1"/><rect x="3" y="4" width="1" height="1"/><rect x="4" y="4" width="1" height="1"/><rect x="1" y="5" width="1" height="1"/><rect x="2" y="5" width="1" height="1"/><rect x="3" y="5" width="1" height="1"/><rect x="2" y="6" width="1" height="1"/></svg><div class="t" style="left:41px;top:541px;color:#000;transform:scaleX(1.0733);letter-spacing:0.55px;">Walking Anim.</div><div style="left:22px;top:562px;width:13px;height:13px;background:#ffffff;border:1px solid;border-color:#808080 #ffffff #ffffff #808080;box-shadow:inset 1px 1px 0 #404040,inset -1px -1px 0 #d4d0c8"></div><div class="t" style="left:41px;top:563px;color:#000;transform:scaleX(1.0703);letter-spacing:0.52px;">Stepping Anim.</div><div style="left:22px;top:585px;width:13px;height:13px;background:#ffffff;border:1px solid;border-color:#808080 #ffffff #ffffff #808080;box-shadow:inset 1px 1px 0 #404040,inset -1px -1px 0 #d4d0c8"></div><div class="t" style="left:41px;top:586px;color:#000;transform:scaleX(1.0581);letter-spacing:0.39px;">Direction Fix</div><div style="left:22px;top:608px;width:13px;height:13px;background:#ffffff;border:1px solid;border-color:#808080 #ffffff #ffffff #808080;box-shadow:inset 1px 1px 0 #404040,inset -1px -1px 0 #d4d0c8"></div><div class="t" style="left:41px;top:609px;color:#000;transform:scaleX(1.0587);letter-spacing:0.49px;">Through</div><div style="left:152px;top:523px;width:178px;height:48px;border:1px solid #ffffff"></div><div style="left:151px;top:522px;width:178px;height:48px;border:1px solid #808080"></div><div style="left:157px;top:521px;width:45px;height:4px;background:#d4d0c8"></div><div class="t" style="left:160px;top:518px;color:#000;transform:scaleX(1.0791);letter-spacing:0.47px;">Priority</div><div style="left:162px;top:537px;width:158px;height:22px;background:#ffffff;border:1px solid;border-color:#808080 #ffffff #ffffff #808080;box-shadow:inset 1px 1px 0 #404040,inset -1px -1px 0 #d4d0c8"></div><div style="left:302px;top:539px;width:16px;height:18px;background:#d4d0c8;border:1px solid;border-color:#d4d0c8 #404040 #404040 #d4d0c8;box-shadow:inset 1px 1px 0 #ffffff,inset -1px -1px 0 #808080"></div><svg style="left:306px;top:546px" width="7" height="4" shape-rendering="crispEdges" fill="#000"><rect x="0" y="0" width="7" height="1"/><rect x="1" y="1" width="5" height="1"/><rect x="2" y="2" width="3" height="1"/><rect x="3" y="3" width="1" height="1"/></svg><div class="t" style="left:166px;top:542px;color:#000;transform:scaleX(1.0628);letter-spacing:0.49px;">Same as Characters</div><div style="left:152px;top:588px;width:178px;height:48px;border:1px solid #ffffff"></div><div style="left:151px;top:587px;width:178px;height:48px;border:1px solid #808080"></div><div style="left:157px;top:586px;width:45px;height:4px;background:#d4d0c8"></div><div class="t" style="left:160px;top:583px;color:#000;transform:scaleX(1.0762);letter-spacing:0.52px;">Trigger</div><div style="left:162px;top:602px;width:158px;height:22px;background:#ffffff;border:1px solid;border-color:#808080 #ffffff #ffffff #808080;box-shadow:inset 1px 1px 0 #404040,inset -1px -1px 0 #d4d0c8"></div><div style="left:302px;top:604px;width:16px;height:18px;background:#d4d0c8;border:1px solid;border-color:#d4d0c8 #404040 #404040 #d4d0c8;box-shadow:inset 1px 1px 0 #ffffff,inset -1px -1px 0 #808080"></div><svg style="left:306px;top:611px" width="7" height="4" shape-rendering="crispEdges" fill="#000"><rect x="0" y="0" width="7" height="1"/><rect x="1" y="1" width="5" height="1"/><rect x="2" y="2" width="3" height="1"/><rect x="3" y="3" width="1" height="1"/></svg><div class="t" style="left:166px;top:607px;color:#000;transform:scaleX(1.0646);letter-spacing:0.46px;">Action Button</div><div class="t" style="left:341px;top:114px;color:#000;transform:scaleX(1.0672);letter-spacing:0.49px;">Contents:</div><div style="left:340px;top:129px;width:487px;height:499px;background:#ffffff;border:1px solid;border-color:#808080 #ffffff #ffffff #808080;box-shadow:inset 1px 1px 0 #404040,inset -1px -1px 0 #d4d0c8"></div><div style="left:809px;top:147px;width:16px;height:463px;background:repeating-conic-gradient(#ffffff 0 25%,#d4d0c8 0 50%) 0 0/2px 2px"></div><div style="left:809px;top:131px;width:16px;height:16px;background:#d4d0c8;border:1px solid;border-color:#d4d0c8 #404040 #404040 #d4d0c8;box-shadow:inset 1px 1px 0 #ffffff,inset -1px -1px 0 #808080"></div><svg style="left:813px;top:137px" width="7" height="4" shape-rendering="crispEdges" fill="#000"><rect x="0" y="3" width="7" height="1"/><rect x="1" y="2" width="5" height="1"/><rect x="2" y="1" width="3" height="1"/><rect x="3" y="0" width="1" height="1"/></svg><div style="left:809px;top:147px;width:16px;height:201px;background:#d4d0c8;border:1px solid;border-color:#d4d0c8 #404040 #404040 #d4d0c8;box-shadow:inset 1px 1px 0 #ffffff,inset -1px -1px 0 #808080"></div><div style="left:809px;top:610px;width:16px;height:16px;background:#d4d0c8;border:1px solid;border-color:#d4d0c8 #404040 #404040 #d4d0c8;box-shadow:inset 1px 1px 0 #ffffff,inset -1px -1px 0 #808080"></div><svg style="left:813px;top:616px" width="7" height="4" shape-rendering="crispEdges" fill="#000"><rect x="0" y="0" width="7" height="1"/><rect x="1" y="1" width="5" height="1"/><rect x="2" y="2" width="3" height="1"/><rect x="3" y="3" width="1" height="1"/></svg><svg style="left:345px;top:135px" width="17" height="10" shape-rendering="crispEdges"><path fill="#000" d="M2 0h5v1h-5zM1 1h1v1h-1zM7 1h1v1h-1zM0 2h1v1h-1zM3 2h3v1h-3zM7 2h1v1h-1zM0 3h1v1h-1zM2 3h1v1h-1zM5 3h1v1h-1zM7 3h1v1h-1zM0 4h1v1h-1zM2 4h1v1h-1zM5 4h1v1h-1zM7 4h1v1h-1zM0 5h1v1h-1zM2 5h1v1h-1zM5 5h1v1h-1zM7 5h1v1h-1zM0 6h1v1h-1zM3 6h2v1h-2zM6 6h1v1h-1zM1 7h1v1h-1zM2 8h4v1h-4zM11 2h2v1h-2zM13 3h2v1h-2zM15 4h2v1h-2zM13 5h2v1h-2zM11 6h2v1h-2z"/></svg><div class="t" style="left:363px;top:133px;color:#008080;transform:scaleX(1.0639);letter-spacing:0.44px;">Play SE: 'Decision2', 80, 100</div><div style="left:342px;top:146px;width:467px;height:15px;background:#0a246a;outline:1px dotted #f5db95;outline-offset:-1px"></div><svg style="left:345px;top:150px" width="17" height="10" shape-rendering="crispEdges"><path fill="#fff" d="M2 0h5v1h-5zM1 1h1v1h-1zM7 1h1v1h-1zM0 2h1v1h-1zM3 2h3v1h-3zM7 2h1v1h-1zM0 3h1v1h-1zM2 3h1v1h-1zM5 3h1v1h-1zM7 3h1v1h-1zM0 4h1v1h-1zM2 4h1v1h-1zM5 4h1v1h-1zM7 4h1v1h-1zM0 5h1v1h-1zM2 5h1v1h-1zM5 5h1v1h-1zM7 5h1v1h-1zM0 6h1v1h-1zM3 6h2v1h-2zM6 6h1v1h-1zM1 7h1v1h-1zM2 8h4v1h-4zM11 2h2v1h-2zM13 3h2v1h-2zM15 4h2v1h-2zM13 5h2v1h-2zM11 6h2v1h-2z"/></svg><div class="t" style="left:363px;top:148px;color:#fff;transform:scaleX(1.0901);letter-spacing:0.59px;">Control Variables: [0005:get rabbit] += 0</div><svg style="left:345px;top:165px" width="17" height="10" shape-rendering="crispEdges"><path fill="#000" d="M2 0h5v1h-5zM1 1h1v1h-1zM7 1h1v1h-1zM0 2h1v1h-1zM3 2h3v1h-3zM7 2h1v1h-1zM0 3h1v1h-1zM2 3h1v1h-1zM5 3h1v1h-1zM7 3h1v1h-1zM0 4h1v1h-1zM2 4h1v1h-1zM5 4h1v1h-1zM7 4h1v1h-1zM0 5h1v1h-1zM2 5h1v1h-1zM5 5h1v1h-1zM7 5h1v1h-1zM0 6h1v1h-1zM3 6h2v1h-2zM6 6h1v1h-1zM1 7h1v1h-1zM2 8h4v1h-4zM11 2h2v1h-2zM13 3h2v1h-2zM15 4h2v1h-2zM13 5h2v1h-2zM11 6h2v1h-2z"/></svg><div class="t" style="left:363px;top:163px;color:#0000ff;transform:scaleX(1.0841);letter-spacing:0.56px;">Conditional Branch: Variable [0005:get rabbit] == 0</div><svg style="left:364px;top:180px" width="17" height="10" shape-rendering="crispEdges"><path fill="#000" d="M2 0h5v1h-5zM1 1h1v1h-1zM7 1h1v1h-1zM0 2h1v1h-1zM3 2h3v1h-3zM7 2h1v1h-1zM0 3h1v1h-1zM2 3h1v1h-1zM5 3h1v1h-1zM7 3h1v1h-1zM0 4h1v1h-1zM2 4h1v1h-1zM5 4h1v1h-1zM7 4h1v1h-1zM0 5h1v1h-1zM2 5h1v1h-1zM5 5h1v1h-1zM7 5h1v1h-1zM0 6h1v1h-1zM3 6h2v1h-2zM6 6h1v1h-1zM1 7h1v1h-1zM2 8h4v1h-4zM11 2h2v1h-2zM13 3h2v1h-2zM15 4h2v1h-2zM13 5h2v1h-2zM11 6h2v1h-2z"/></svg><div class="t" style="left:380px;top:178px;color:#000;transform:scaleX(1.1337);letter-spacing:0.82px;">Text:</div><div class="t" style="left:417px;top:178px;color:#a0a0a0;transform:scaleX(1.0772);letter-spacing:0.52px;">'Actor5', 7, Normal, Bottom</div><div class="t" style="left:367px;top:193px;color:#000;transform:scaleX(1.2531);letter-spacing:0.93px;">:</div><div class="t" style="left:408px;top:193px;color:#000;transform:scaleX(1.2531);letter-spacing:0.93px;">:</div><div class="t" style="left:416px;top:193px;color:#000080;transform:scaleX(1.0759);letter-spacing:0.52px;">You don't have any rabbits.</div><svg style="left:364px;top:210px" width="17" height="10" shape-rendering="crispEdges"><path fill="#000" d="M2 0h5v1h-5zM1 1h1v1h-1zM7 1h1v1h-1zM0 2h1v1h-1zM3 2h3v1h-3zM7 2h1v1h-1zM0 3h1v1h-1zM2 3h1v1h-1zM5 3h1v1h-1zM7 3h1v1h-1zM0 4h1v1h-1zM2 4h1v1h-1zM5 4h1v1h-1zM7 4h1v1h-1zM0 5h1v1h-1zM2 5h1v1h-1zM5 5h1v1h-1zM7 5h1v1h-1zM0 6h1v1h-1zM3 6h2v1h-2zM6 6h1v1h-1zM1 7h1v1h-1zM2 8h4v1h-4zM11 2h2v1h-2zM13 3h2v1h-2zM15 4h2v1h-2zM13 5h2v1h-2zM11 6h2v1h-2z"/></svg><div class="t" style="left:380px;top:208px;color:#000;transform:scaleX(1.1337);letter-spacing:0.82px;">Text:</div><div class="t" style="left:417px;top:208px;color:#a0a0a0;transform:scaleX(1.0772);letter-spacing:0.52px;">'Actor5', 7, Normal, Bottom</div><div class="t" style="left:367px;top:223px;color:#000;transform:scaleX(1.2531);letter-spacing:0.93px;">:</div><div class="t" style="left:408px;top:223px;color:#000;transform:scaleX(1.2531);letter-spacing:0.93px;">:</div><div class="t" style="left:416px;top:223px;color:#000080;transform:scaleX(1.0740);letter-spacing:0.51px;">Gabbie: Go get those rabbit before they</div><div class="t" style="left:367px;top:238px;color:#000;transform:scaleX(1.2531);letter-spacing:0.93px;">:</div><div class="t" style="left:408px;top:238px;color:#000;transform:scaleX(1.2531);letter-spacing:0.93px;">:</div><div class="t" style="left:416px;top:238px;color:#000080;transform:scaleX(1.0819);letter-spacing:0.53px;">retreat back into their burrows.</div><svg style="left:364px;top:255px" width="17" height="10" shape-rendering="crispEdges"><path fill="#000" d="M2 0h5v1h-5zM1 1h1v1h-1zM7 1h1v1h-1zM0 2h1v1h-1zM3 2h3v1h-3zM7 2h1v1h-1zM0 3h1v1h-1zM2 3h1v1h-1zM5 3h1v1h-1zM7 3h1v1h-1zM0 4h1v1h-1zM2 4h1v1h-1zM5 4h1v1h-1zM7 4h1v1h-1zM0 5h1v1h-1zM2 5h1v1h-1zM5 5h1v1h-1zM7 5h1v1h-1zM0 6h1v1h-1zM3 6h2v1h-2zM6 6h1v1h-1zM1 7h1v1h-1zM2 8h4v1h-4zM11 2h2v1h-2zM13 3h2v1h-2zM15 4h2v1h-2zM13 5h2v1h-2zM11 6h2v1h-2z"/></svg><div class="t" style="left:349px;top:268px;color:#000;transform:scaleX(1.2531);letter-spacing:0.93px;">:</div><div class="t" style="left:364px;top:268px;color:#0000ff;transform:scaleX(1.0298);letter-spacing:0.23px;">Else</div><svg style="left:364px;top:285px" width="17" height="10" shape-rendering="crispEdges"><path fill="#000" d="M2 0h5v1h-5zM1 1h1v1h-1zM7 1h1v1h-1zM0 2h1v1h-1zM3 2h3v1h-3zM7 2h1v1h-1zM0 3h1v1h-1zM2 3h1v1h-1zM5 3h1v1h-1zM7 3h1v1h-1zM0 4h1v1h-1zM2 4h1v1h-1zM5 4h1v1h-1zM7 4h1v1h-1zM0 5h1v1h-1zM2 5h1v1h-1zM5 5h1v1h-1zM7 5h1v1h-1zM0 6h1v1h-1zM3 6h2v1h-2zM6 6h1v1h-1zM1 7h1v1h-1zM2 8h4v1h-4zM11 2h2v1h-2zM13 3h2v1h-2zM15 4h2v1h-2zM13 5h2v1h-2zM11 6h2v1h-2z"/></svg><div class="t" style="left:382px;top:283px;color:#0000ff;transform:scaleX(1.0841);letter-spacing:0.56px;">Conditional Branch: Variable [0005:get rabbit] == 1</div><svg style="left:383px;top:300px" width="17" height="10" shape-rendering="crispEdges"><path fill="#000" d="M2 0h5v1h-5zM1 1h1v1h-1zM7 1h1v1h-1zM0 2h1v1h-1zM3 2h3v1h-3zM7 2h1v1h-1zM0 3h1v1h-1zM2 3h1v1h-1zM5 3h1v1h-1zM7 3h1v1h-1zM0 4h1v1h-1zM2 4h1v1h-1zM5 4h1v1h-1zM7 4h1v1h-1zM0 5h1v1h-1zM2 5h1v1h-1zM5 5h1v1h-1zM7 5h1v1h-1zM0 6h1v1h-1zM3 6h2v1h-2zM6 6h1v1h-1zM1 7h1v1h-1zM2 8h4v1h-4zM11 2h2v1h-2zM13 3h2v1h-2zM15 4h2v1h-2zM13 5h2v1h-2zM11 6h2v1h-2z"/></svg><div class="t" style="left:399px;top:298px;color:#000;transform:scaleX(1.1337);letter-spacing:0.82px;">Text:</div><div class="t" style="left:436px;top:298px;color:#a0a0a0;transform:scaleX(1.0772);letter-spacing:0.52px;">'Actor5', 7, Normal, Bottom</div><div class="t" style="left:386px;top:313px;color:#000;transform:scaleX(1.2531);letter-spacing:0.93px;">:</div><div class="t" style="left:427px;top:313px;color:#000;transform:scaleX(1.2531);letter-spacing:0.93px;">:</div><div class="t" style="left:435px;top:313px;color:#000080;transform:scaleX(1.0747);letter-spacing:0.52px;">Gabbie: You only have one rabbit.</div><div class="t" style="left:386px;top:328px;color:#000;transform:scaleX(1.2531);letter-spacing:0.93px;">:</div><div class="t" style="left:427px;top:328px;color:#000;transform:scaleX(1.2531);letter-spacing:0.93px;">:</div><div class="t" style="left:435px;top:328px;color:#000080;transform:scaleX(1.0790);letter-spacing:0.51px;">There are still more rabbits out there.</div><div class="t" style="left:386px;top:343px;color:#000;transform:scaleX(1.2531);letter-spacing:0.93px;">:</div><div class="t" style="left:427px;top:343px;color:#000;transform:scaleX(1.2531);letter-spacing:0.93px;">:</div><div class="t" style="left:435px;top:343px;color:#000080;transform:scaleX(1.0773);letter-spacing:0.52px;">You have to get them all.</div><svg style="left:383px;top:360px" width="17" height="10" shape-rendering="crispEdges"><path fill="#000" d="M2 0h5v1h-5zM1 1h1v1h-1zM7 1h1v1h-1zM0 2h1v1h-1zM3 2h3v1h-3zM7 2h1v1h-1zM0 3h1v1h-1zM2 3h1v1h-1zM5 3h1v1h-1zM7 3h1v1h-1zM0 4h1v1h-1zM2 4h1v1h-1zM5 4h1v1h-1zM7 4h1v1h-1zM0 5h1v1h-1zM2 5h1v1h-1zM5 5h1v1h-1zM7 5h1v1h-1zM0 6h1v1h-1zM3 6h2v1h-2zM6 6h1v1h-1zM1 7h1v1h-1zM2 8h4v1h-4zM11 2h2v1h-2zM13 3h2v1h-2zM15 4h2v1h-2zM13 5h2v1h-2zM11 6h2v1h-2z"/></svg><div class="t" style="left:368px;top:373px;color:#000;transform:scaleX(1.2531);letter-spacing:0.93px;">:</div><div class="t" style="left:383px;top:373px;color:#0000ff;transform:scaleX(1.0298);letter-spacing:0.23px;">Else</div><svg style="left:383px;top:390px" width="17" height="10" shape-rendering="crispEdges"><path fill="#000" d="M2 0h5v1h-5zM1 1h1v1h-1zM7 1h1v1h-1zM0 2h1v1h-1zM3 2h3v1h-3zM7 2h1v1h-1zM0 3h1v1h-1zM2 3h1v1h-1zM5 3h1v1h-1zM7 3h1v1h-1zM0 4h1v1h-1zM2 4h1v1h-1zM5 4h1v1h-1zM7 4h1v1h-1zM0 5h1v1h-1zM2 5h1v1h-1zM5 5h1v1h-1zM7 5h1v1h-1zM0 6h1v1h-1zM3 6h2v1h-2zM6 6h1v1h-1zM1 7h1v1h-1zM2 8h4v1h-4zM11 2h2v1h-2zM13 3h2v1h-2zM15 4h2v1h-2zM13 5h2v1h-2zM11 6h2v1h-2z"/></svg><div class="t" style="left:401px;top:388px;color:#0000ff;transform:scaleX(1.0841);letter-spacing:0.56px;">Conditional Branch: Variable [0005:get rabbit] &lt;= 9</div><svg style="left:402px;top:405px" width="17" height="10" shape-rendering="crispEdges"><path fill="#000" d="M2 0h5v1h-5zM1 1h1v1h-1zM7 1h1v1h-1zM0 2h1v1h-1zM3 2h3v1h-3zM7 2h1v1h-1zM0 3h1v1h-1zM2 3h1v1h-1zM5 3h1v1h-1zM7 3h1v1h-1zM0 4h1v1h-1zM2 4h1v1h-1zM5 4h1v1h-1zM7 4h1v1h-1zM0 5h1v1h-1zM2 5h1v1h-1zM5 5h1v1h-1zM7 5h1v1h-1zM0 6h1v1h-1zM3 6h2v1h-2zM6 6h1v1h-1zM1 7h1v1h-1zM2 8h4v1h-4zM11 2h2v1h-2zM13 3h2v1h-2zM15 4h2v1h-2zM13 5h2v1h-2zM11 6h2v1h-2z"/></svg><div class="t" style="left:418px;top:403px;color:#000;transform:scaleX(1.1337);letter-spacing:0.82px;">Text:</div><div class="t" style="left:455px;top:403px;color:#a0a0a0;transform:scaleX(1.0772);letter-spacing:0.52px;">'Actor5', 7, Normal, Bottom</div><div class="t" style="left:405px;top:418px;color:#000;transform:scaleX(1.2531);letter-spacing:0.93px;">:</div><div class="t" style="left:446px;top:418px;color:#000;transform:scaleX(1.2531);letter-spacing:0.93px;">:</div><div class="t" style="left:454px;top:418px;color:#000080;transform:scaleX(1.0831);letter-spacing:0.57px;">Gabbie: You only have \V[005] rabbits.</div><svg style="left:402px;top:435px" width="17" height="10" shape-rendering="crispEdges"><path fill="#000" d="M2 0h5v1h-5zM1 1h1v1h-1zM7 1h1v1h-1zM0 2h1v1h-1zM3 2h3v1h-3zM7 2h1v1h-1zM0 3h1v1h-1zM2 3h1v1h-1zM5 3h1v1h-1zM7 3h1v1h-1zM0 4h1v1h-1zM2 4h1v1h-1zM5 4h1v1h-1zM7 4h1v1h-1zM0 5h1v1h-1zM2 5h1v1h-1zM5 5h1v1h-1zM7 5h1v1h-1zM0 6h1v1h-1zM3 6h2v1h-2zM6 6h1v1h-1zM1 7h1v1h-1zM2 8h4v1h-4zM11 2h2v1h-2zM13 3h2v1h-2zM15 4h2v1h-2zM13 5h2v1h-2zM11 6h2v1h-2z"/></svg><div class="t" style="left:418px;top:433px;color:#000;transform:scaleX(1.1337);letter-spacing:0.82px;">Text:</div><div class="t" style="left:455px;top:433px;color:#a0a0a0;transform:scaleX(1.0772);letter-spacing:0.52px;">'Actor5', 7, Normal, Bottom</div><div class="t" style="left:405px;top:448px;color:#000;transform:scaleX(1.2531);letter-spacing:0.93px;">:</div><div class="t" style="left:446px;top:448px;color:#000;transform:scaleX(1.2531);letter-spacing:0.93px;">:</div><div class="t" style="left:454px;top:448px;color:#000080;transform:scaleX(1.0749);letter-spacing:0.51px;">You need to get them all.</div><svg style="left:402px;top:465px" width="17" height="10" shape-rendering="crispEdges"><path fill="#000" d="M2 0h5v1h-5zM1 1h1v1h-1zM7 1h1v1h-1zM0 2h1v1h-1zM3 2h3v1h-3zM7 2h1v1h-1zM0 3h1v1h-1zM2 3h1v1h-1zM5 3h1v1h-1zM7 3h1v1h-1zM0 4h1v1h-1zM2 4h1v1h-1zM5 4h1v1h-1zM7 4h1v1h-1zM0 5h1v1h-1zM2 5h1v1h-1zM5 5h1v1h-1zM7 5h1v1h-1zM0 6h1v1h-1zM3 6h2v1h-2zM6 6h1v1h-1zM1 7h1v1h-1zM2 8h4v1h-4zM11 2h2v1h-2zM13 3h2v1h-2zM15 4h2v1h-2zM13 5h2v1h-2zM11 6h2v1h-2z"/></svg><div class="t" style="left:387px;top:478px;color:#000;transform:scaleX(1.2531);letter-spacing:0.93px;">:</div><div class="t" style="left:402px;top:478px;color:#0000ff;transform:scaleX(1.0298);letter-spacing:0.23px;">Else</div><svg style="left:402px;top:495px" width="17" height="10" shape-rendering="crispEdges"><path fill="#000" d="M2 0h5v1h-5zM1 1h1v1h-1zM7 1h1v1h-1zM0 2h1v1h-1zM3 2h3v1h-3zM7 2h1v1h-1zM0 3h1v1h-1zM2 3h1v1h-1zM5 3h1v1h-1zM7 3h1v1h-1zM0 4h1v1h-1zM2 4h1v1h-1zM5 4h1v1h-1zM7 4h1v1h-1zM0 5h1v1h-1zM2 5h1v1h-1zM5 5h1v1h-1zM7 5h1v1h-1zM0 6h1v1h-1zM3 6h2v1h-2zM6 6h1v1h-1zM1 7h1v1h-1zM2 8h4v1h-4zM11 2h2v1h-2zM13 3h2v1h-2zM15 4h2v1h-2zM13 5h2v1h-2zM11 6h2v1h-2z"/></svg><div class="t" style="left:420px;top:493px;color:#008080;transform:scaleX(1.0543);letter-spacing:0.43px;">Fadeout BGM: 10 sec.</div><svg style="left:402px;top:510px" width="17" height="10" shape-rendering="crispEdges"><path fill="#000" d="M2 0h5v1h-5zM1 1h1v1h-1zM7 1h1v1h-1zM0 2h1v1h-1zM3 2h3v1h-3zM7 2h1v1h-1zM0 3h1v1h-1zM2 3h1v1h-1zM5 3h1v1h-1zM7 3h1v1h-1zM0 4h1v1h-1zM2 4h1v1h-1zM5 4h1v1h-1zM7 4h1v1h-1zM0 5h1v1h-1zM2 5h1v1h-1zM5 5h1v1h-1zM7 5h1v1h-1zM0 6h1v1h-1zM3 6h2v1h-2zM6 6h1v1h-1zM1 7h1v1h-1zM2 8h4v1h-4zM11 2h2v1h-2zM13 3h2v1h-2zM15 4h2v1h-2zM13 5h2v1h-2zM11 6h2v1h-2z"/></svg><div class="t" style="left:420px;top:508px;color:#ff0000;transform:scaleX(1.0770);letter-spacing:0.53px;">Control Timer: Stop</div><svg style="left:402px;top:525px" width="17" height="10" shape-rendering="crispEdges"><path fill="#000" d="M2 0h5v1h-5zM1 1h1v1h-1zM7 1h1v1h-1zM0 2h1v1h-1zM3 2h3v1h-3zM7 2h1v1h-1zM0 3h1v1h-1zM2 3h1v1h-1zM5 3h1v1h-1zM7 3h1v1h-1zM0 4h1v1h-1zM2 4h1v1h-1zM5 4h1v1h-1zM7 4h1v1h-1zM0 5h1v1h-1zM2 5h1v1h-1zM5 5h1v1h-1zM7 5h1v1h-1zM0 6h1v1h-1zM3 6h2v1h-2zM6 6h1v1h-1zM1 7h1v1h-1zM2 8h4v1h-4zM11 2h2v1h-2zM13 3h2v1h-2zM15 4h2v1h-2zM13 5h2v1h-2zM11 6h2v1h-2z"/></svg><div class="t" style="left:418px;top:523px;color:#000;transform:scaleX(1.1337);letter-spacing:0.82px;">Text:</div><div class="t" style="left:455px;top:523px;color:#a0a0a0;transform:scaleX(1.0773);letter-spacing:0.49px;">-, -, Dark, Middle</div><div class="t" style="left:405px;top:538px;color:#000;transform:scaleX(1.2531);letter-spacing:0.93px;">:</div><div class="t" style="left:446px;top:538px;color:#000;transform:scaleX(1.2531);letter-spacing:0.93px;">:</div><div class="t" style="left:454px;top:538px;color:#000080;transform:scaleX(1.0746);letter-spacing:0.49px;">Brent shows her a bag of all the rabbits.</div><svg style="left:402px;top:555px" width="17" height="10" shape-rendering="crispEdges"><path fill="#000" d="M2 0h5v1h-5zM1 1h1v1h-1zM7 1h1v1h-1zM0 2h1v1h-1zM3 2h3v1h-3zM7 2h1v1h-1zM0 3h1v1h-1zM2 3h1v1h-1zM5 3h1v1h-1zM7 3h1v1h-1zM0 4h1v1h-1zM2 4h1v1h-1zM5 4h1v1h-1zM7 4h1v1h-1zM0 5h1v1h-1zM2 5h1v1h-1zM5 5h1v1h-1zM7 5h1v1h-1zM0 6h1v1h-1zM3 6h2v1h-2zM6 6h1v1h-1zM1 7h1v1h-1zM2 8h4v1h-4zM11 2h2v1h-2zM13 3h2v1h-2zM15 4h2v1h-2zM13 5h2v1h-2zM11 6h2v1h-2z"/></svg><div class="t" style="left:418px;top:553px;color:#000;transform:scaleX(1.1337);letter-spacing:0.82px;">Text:</div><div class="t" style="left:455px;top:553px;color:#a0a0a0;transform:scaleX(1.0772);letter-spacing:0.52px;">'Actor5', 7, Normal, Bottom</div><div class="t" style="left:405px;top:568px;color:#000;transform:scaleX(1.2531);letter-spacing:0.93px;">:</div><div class="t" style="left:446px;top:568px;color:#000;transform:scaleX(1.2531);letter-spacing:0.93px;">:</div><div class="t" style="left:454px;top:568px;color:#000080;transform:scaleX(1.0750);letter-spacing:0.51px;">Gabbie: You got them all.</div><svg style="left:402px;top:585px" width="17" height="10" shape-rendering="crispEdges"><path fill="#000" d="M2 0h5v1h-5zM1 1h1v1h-1zM7 1h1v1h-1zM0 2h1v1h-1zM3 2h3v1h-3zM7 2h1v1h-1zM0 3h1v1h-1zM2 3h1v1h-1zM5 3h1v1h-1zM7 3h1v1h-1zM0 4h1v1h-1zM2 4h1v1h-1zM5 4h1v1h-1zM7 4h1v1h-1zM0 5h1v1h-1zM2 5h1v1h-1zM5 5h1v1h-1zM7 5h1v1h-1zM0 6h1v1h-1zM3 6h2v1h-2zM6 6h1v1h-1zM1 7h1v1h-1zM2 8h4v1h-4zM11 2h2v1h-2zM13 3h2v1h-2zM15 4h2v1h-2zM13 5h2v1h-2zM11 6h2v1h-2z"/></svg><div class="t" style="left:418px;top:583px;color:#000;transform:scaleX(1.1337);letter-spacing:0.82px;">Text:</div><div class="t" style="left:455px;top:583px;color:#a0a0a0;transform:scaleX(1.0772);letter-spacing:0.52px;">'Actor5', 7, Normal, Bottom</div><div class="t" style="left:405px;top:598px;color:#000;transform:scaleX(1.2531);letter-spacing:0.93px;">:</div><div class="t" style="left:446px;top:598px;color:#000;transform:scaleX(1.2531);letter-spacing:0.93px;">:</div><div class="t" style="left:454px;top:598px;color:#000080;transform:scaleX(1.0829);letter-spacing:0.54px;">Gabbie: I'd kiss you if you weren't</div><div class="t" style="left:405px;top:613px;color:#000;transform:scaleX(1.2531);letter-spacing:0.93px;">:</div><div class="t" style="left:446px;top:613px;color:#000;transform:scaleX(1.2531);letter-spacing:0.93px;">:</div><div class="t" style="left:454px;top:613px;color:#000080;transform:scaleX(1.0825);letter-spacing:0.52px;">dirty and reeking of rabbit repellent.</div><div style="left:562px;top:657px;width:88px;height:23px;background:#d4d0c8;border:1px solid;border-color:#ffffff #404040 #404040 #ffffff;box-shadow:inset -1px -1px 0 #808080"></div><div class="t" style="left:597px;top:662px;color:#000;transform:scaleX(1.0275);letter-spacing:0.32px;">OK</div><div style="left:656px;top:657px;width:88px;height:23px;background:#d4d0c8;border:1px solid;border-color:#ffffff #404040 #404040 #ffffff;box-shadow:inset -1px -1px 0 #808080"></div><div class="t" style="left:681px;top:662px;color:#000;transform:scaleX(1.0438);letter-spacing:0.36px;">Cancel</div><div style="left:751px;top:657px;width:88px;height:23px;background:#d4d0c8;border:1px solid;border-color:#ffffff #404040 #404040 #ffffff;box-shadow:inset -1px -1px 0 #808080"></div><div class="t" style="left:781px;top:663px;color:#ffffff;transform:scaleX(1.0649);letter-spacing:0.50px;">Apply</div><div class="t" style="left:780px;top:662px;color:#808080;transform:scaleX(1.0649);letter-spacing:0.50px;">Apply</div></body></html>
